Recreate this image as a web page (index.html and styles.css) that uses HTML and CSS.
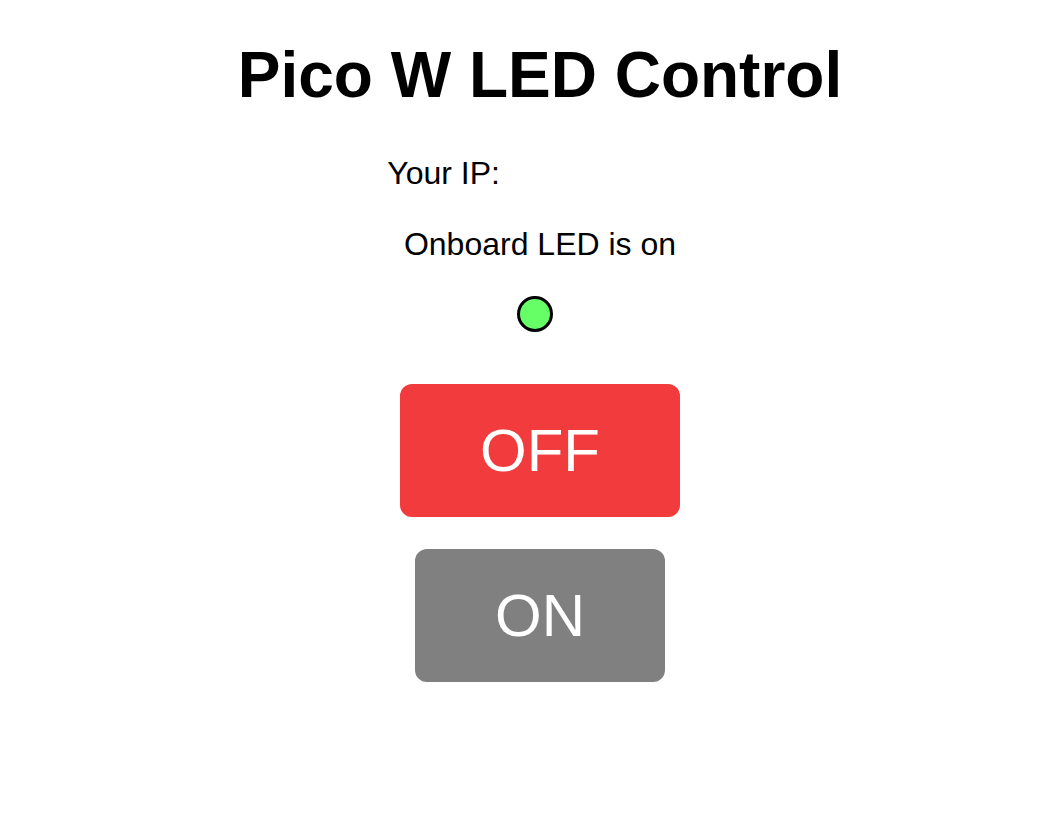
FILE: index.html
```html
<!DOCTYPE html>
<html>
<head>
<meta charset="utf-8">
<title>Pico W LED Control</title>
<link rel="stylesheet" href="styles.css">
</head>
<body>
<main class="page">
  <h1 class="title">Pico W LED Control</h1>
  <p class="ip">Your IP: <span class="ip-value"></span></p>
  <p class="status">Onboard LED is on</p>
  <div class="led"></div>
  <div class="buttons">
    <button class="btn btn-off">OFF</button>
    <button class="btn btn-on">ON</button>
  </div>
</main>
</body>
</html>
```
FILE: styles.css
```css
html, body {
  margin: 0;
  padding: 0;
  background: #ffffff;
}
body {
  font-family: "Liberation Sans", Arial, sans-serif;
  color: #000;
}
.page {
  display: flex;
  flex-direction: column;
  align-items: center;
  box-sizing: border-box;
  width: 100%;
  padding-top: 38px;
  padding-left: 23px;
}
.title {
  font-size: 64px;
  font-weight: bold;
  margin: 0;
  line-height: 74px;
}
.ip {
  font-size: 32px;
  margin: 43px 0 0 0;
  line-height: 37px;
}
.ip-value {
  display: inline-block;
  width: 184px;
  height: 20px;
}
.status {
  font-size: 32px;
  margin: 34px 0 0 0;
  line-height: 37px;
}
.led {
  width: 30px;
  height: 30px;
  border: 3px solid #000;
  border-radius: 50%;
  background: #66ff66;
  margin-top: 33px;
  margin-right: 10px;
}
.buttons {
  display: flex;
  flex-direction: column;
  align-items: center;
  gap: 32px;
  margin-top: 52px;
}
.btn {
  font-family: "Liberation Sans", Arial, sans-serif;
  font-size: 60px;
  color: #fff;
  border: none;
  border-radius: 12px;
  padding: 32px 80px;
  line-height: 69px;
  cursor: pointer;
}
.btn-off {
  background: #f23b3c;
}
.btn-on {
  background: #808080;
}
```
